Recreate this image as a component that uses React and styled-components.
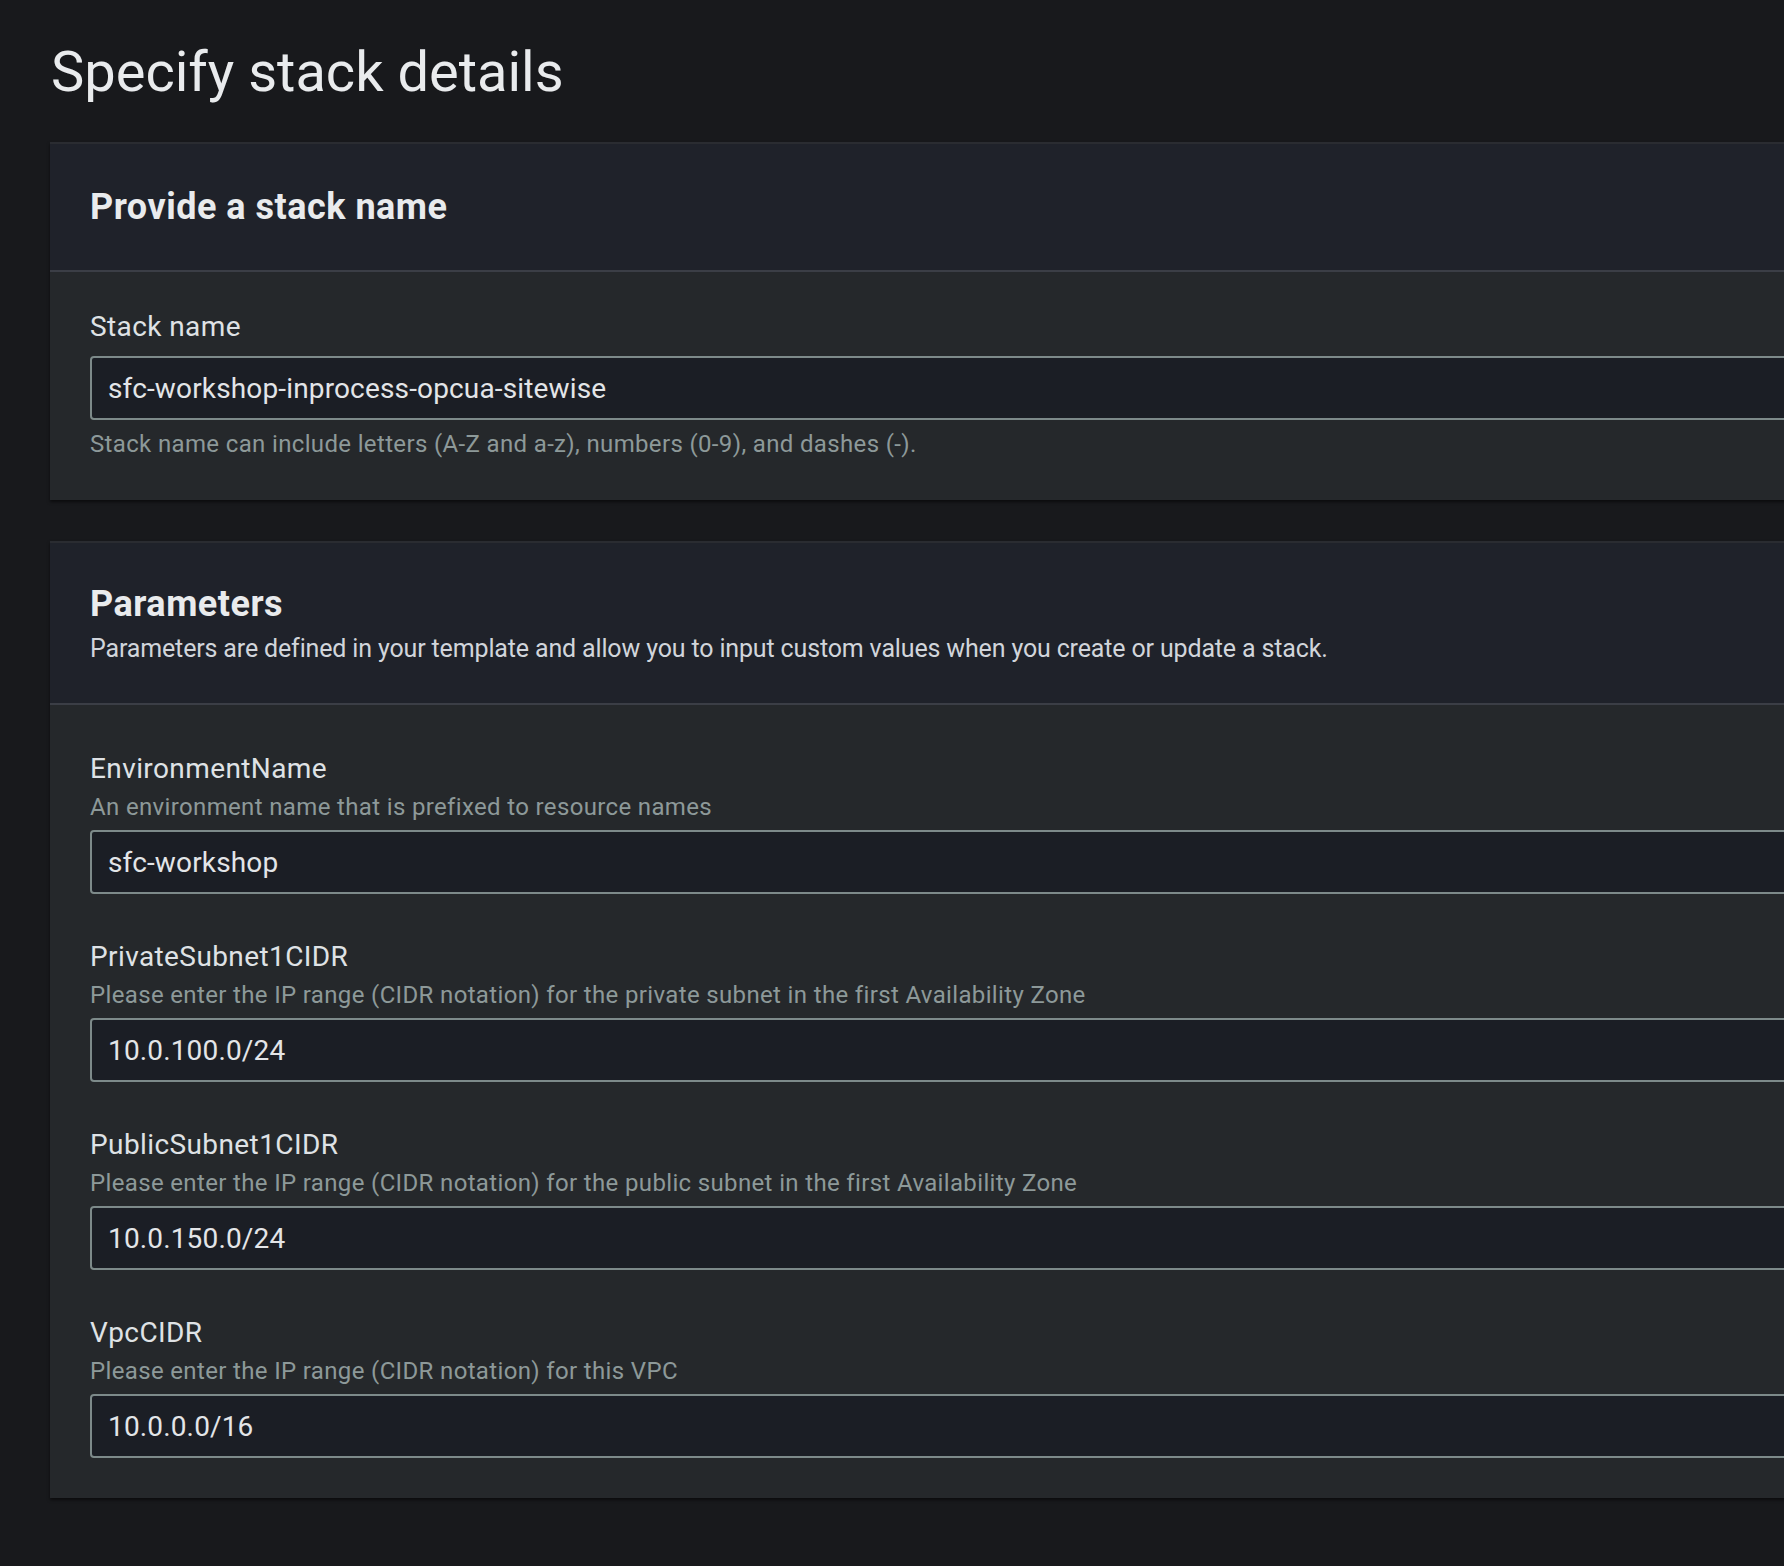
import React from "react";
import styled, { createGlobalStyle } from "styled-components";

const GlobalStyle = createGlobalStyle`
  html, body {
    margin: 0;
    padding: 0;
    background: #18191c;
    overflow: hidden;
  }
  body {
    font-family: Roboto, "Noto Sans", sans-serif;
    -webkit-font-smoothing: antialiased;
  }
`;

// the screenshot is cropped on the right, so the cards run on past the edge
const Page = styled.div`
  width: 100%;
  min-height: 1566px;
  padding: 26px 0 0 50px;
  box-sizing: border-box;
  overflow: hidden;
`;

const Title = styled.h1`
  margin: 0 0 24px 1px;
  font-size: 56px;
  line-height: 92px;
  font-weight: 400;
  color: #e9ebed;
`;

const Card = styled.section`
  margin: 0 -200px 41px 0;
  background: #25282b;
  border-top: 2px solid #2a2c31;
  box-shadow: 0 2px 3px rgba(0, 0, 0, 0.55);
`;

const CardHeader = styled.div`
  background: #1f222a;
  padding: ${(p) => (p.$withText ? "38px 40px 34px" : "40px 40px 40px")};
  border-bottom: 2px solid #3b3e46;
`;

const CardTitle = styled.h2`
  margin: 0;
  font-size: 36px;
  line-height: 46px;
  font-weight: 700;
  letter-spacing: 0.5px;
  color: #e9ebed;
`;

const CardDescription = styled.p`
  margin: 2px 0 0;
  font-size: 25px;
  line-height: 40px;
  letter-spacing: -0.15px;
  color: #d1d5db;
`;

const CardBody = styled.div`
  padding: ${(p) => (p.$params ? "44px 40px 40px" : "35px 40px 40px")};
  display: flex;
  flex-direction: column;
  gap: 43px;
`;

const Field = styled.div`
  display: flex;
  flex-direction: column;
`;

const Label = styled.label`
  font-size: 28px;
  line-height: 40px;
  letter-spacing: 0.4px;
  color: #dfe2e5;
`;

const Hint = styled.div`
  margin-top: 2px;
  font-size: 24px;
  line-height: 32px;
  letter-spacing: 0.35px;
  color: #8d9999;
`;

const Input = styled.input`
  box-sizing: border-box;
  width: 100%;
  height: 64px;
  margin-top: ${(p) => (p.$afterHint ? "7px" : "9px")};
  padding: 0 16px;
  background: #1b1e25;
  border: 2px solid #7d8a8a;
  border-radius: 4px;
  font-family: inherit;
  font-size: 28px;
  letter-spacing: 0.15px;
  color: #e3e5e8;
  outline: none;
`;

const Constraint = styled.div`
  margin-top: 8px;
  font-size: 24px;
  line-height: 32px;
  letter-spacing: 0.35px;
  color: #8d9999;
`;

const params = [
  {
    name: "EnvironmentName",
    hint: "An environment name that is prefixed to resource names",
    value: "sfc-workshop",
  },
  {
    name: "PrivateSubnet1CIDR",
    hint: "Please enter the IP range (CIDR notation) for the private subnet in the first Availability Zone",
    value: "10.0.100.0/24",
  },
  {
    name: "PublicSubnet1CIDR",
    hint: "Please enter the IP range (CIDR notation) for the public subnet in the first Availability Zone",
    value: "10.0.150.0/24",
  },
  {
    name: "VpcCIDR",
    hint: "Please enter the IP range (CIDR notation) for this VPC",
    value: "10.0.0.0/16",
  },
];

export default function App() {
  return (
    <Page>
      <GlobalStyle />
      <Title>Specify stack details</Title>

      <Card>
        <CardHeader>
          <CardTitle>Provide a stack name</CardTitle>
        </CardHeader>
        <CardBody>
          <Field>
            <Label>Stack name</Label>
            <Input defaultValue="sfc-workshop-inprocess-opcua-sitewise" />
            <Constraint>
              Stack name can include letters (A-Z and a-z), numbers (0-9), and dashes (-).
            </Constraint>
          </Field>
        </CardBody>
      </Card>

      <Card>
        <CardHeader $withText>
          <CardTitle>Parameters</CardTitle>
          <CardDescription>
            Parameters are defined in your template and allow you to input custom values when you create or update a stack.
          </CardDescription>
        </CardHeader>
        <CardBody $params>
          {params.map((p) => (
            <Field key={p.name}>
              <Label>{p.name}</Label>
              <Hint>{p.hint}</Hint>
              <Input $afterHint defaultValue={p.value} />
            </Field>
          ))}
        </CardBody>
      </Card>
    </Page>
  );
}
